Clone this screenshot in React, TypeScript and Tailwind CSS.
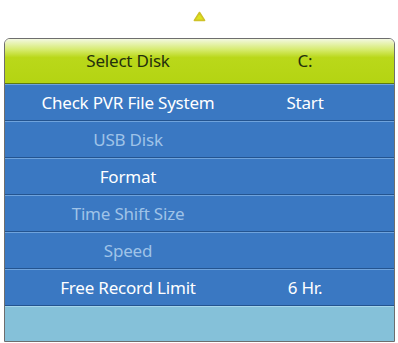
const rows: { label: string; value?: string; disabled?: boolean }[] = [
  { label: 'Check PVR File System', value: 'Start' },
  { label: 'USB Disk', disabled: true },
  { label: 'Format' },
  { label: 'Time Shift Size', disabled: true },
  { label: 'Speed', disabled: true },
  { label: 'Free Record Limit', value: '6 Hr.' },
]

function MenuRow({ label, value, disabled }: { label: string; value?: string; disabled?: boolean }) {
  const tone = disabled ? 'text-[#9fc3e8]' : 'text-white'
  return (
    <div className="flex h-[37px] items-center border-t border-t-[#6fa3dc] border-b border-b-[#24548f] bg-[#3a78c2]">
      <div className={`w-[246px] text-center ${tone}`}>{label}</div>
      <div className={`w-[108px] text-center ${tone}`}>{value}</div>
    </div>
  )
}

export default function App() {
  return (
    <div
      className="w-[398px] h-[343px] bg-white"
      style={{ fontFamily: '"Noto Sans", "Open Sans", sans-serif' }}
    >
      <div className="flex h-[38px] justify-center pt-[11px]">
        <svg width="13" height="11" viewBox="0 0 13 11">
          <path
            d="M6.5 1.5 L11.6 9.4 L1.4 9.4 Z"
            fill="#dde41c"
            stroke="#cfc228"
            strokeWidth="1.6"
            strokeLinejoin="round"
          />
        </svg>
      </div>
      <div className="ml-[4px] w-[391px] overflow-hidden rounded-t-[6px] border border-[#6e6e6e] text-[17px] tracking-[-0.2px]">
        <div className="flex h-[45px] items-center border-b border-b-[#5d7a10] bg-[linear-gradient(to_bottom,#f3f8e0_0%,#d4ea66_26%,#bad81a_42%,#b4d412_100%)] text-[#24300c]">
          <div className="w-[246px] text-center">Select Disk</div>
          <div className="w-[108px] text-center">C:</div>
        </div>
        {rows.map((r) => (
          <MenuRow key={r.label} {...r} />
        ))}
        <div className="h-[35px] border-t border-t-[#a6d6ea] bg-[#85c1d9]" />
      </div>
    </div>
  )
}
